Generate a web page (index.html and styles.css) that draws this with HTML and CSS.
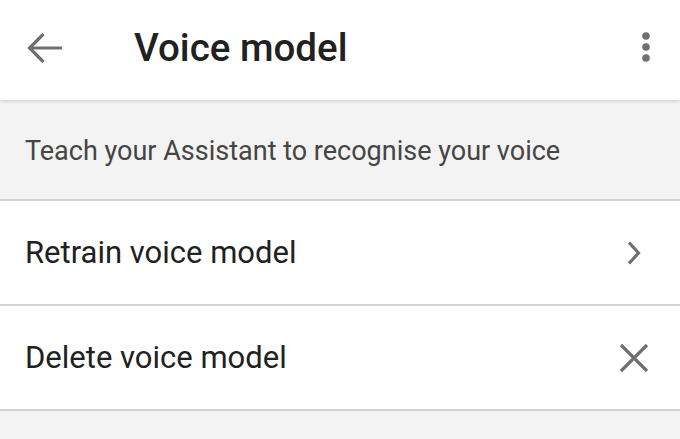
FILE: index.html
```html
<!DOCTYPE html>
<html>
<head>
<meta charset="utf-8">
<link rel="stylesheet" href="styles.css">
</head>
<body>
<header class="appbar">
  <svg class="back" width="40" height="40" viewBox="0 0 40 40"><path d="M38 20H8M19.5 6L5.5 20L19.5 34" fill="none" stroke="#707070" stroke-width="3.2"/></svg>
  <h1 class="title">Voice model</h1>
  <svg class="more" width="12" height="34" viewBox="0 0 12 34"><circle cx="6" cy="5" r="3.8" fill="#707070"/><circle cx="6" cy="16" r="3.8" fill="#707070"/><circle cx="6" cy="27" r="3.8" fill="#707070"/></svg>
</header>
<section class="intro">Teach your Assistant to recognise your voice</section>
<div class="row">
  <span class="label">Retrain voice model</span>
  <svg class="icon" width="30" height="30" viewBox="0 0 30 30"><path d="M10 4.5L19.5 15L10 25.5" fill="none" stroke="#707070" stroke-width="3.2"/></svg>
</div>
<div class="row">
  <span class="label">Delete voice model</span>
  <svg class="icon" width="30" height="30" viewBox="0 0 30 30"><path d="M2 2L28 28M28 2L2 28" fill="none" stroke="#707070" stroke-width="3.2"/></svg>
</div>
</body>
</html>
```
FILE: styles.css
```css
html, body {
  margin: 0;
  padding: 0;
  background: #f3f3f3;
  font-family: Roboto, "Liberation Sans", sans-serif;
}
.appbar {
  position: relative;
  z-index: 1;
  height: 100px;
  background: #fff;
  display: flex;
  align-items: center;
  padding: 0 28px 0 24px;
  box-shadow: 0 1px 4px rgba(0,0,0,0.16);
}
.back {
  margin-top: -4px;
}
.title {
  margin: -4px 0 0 70px;
  flex: 1;
  font-size: 38.5px;
  font-weight: 500;
  color: #212121;
  line-height: 1;
}
.more {
  margin-top: -5px;
}
.intro {
  height: 101px;
  box-sizing: border-box;
  display: flex;
  align-items: center;
  padding: 2px 25px 0;
  font-size: 27px;
  color: #454545;
  border-bottom: 2px solid #d2d2d2;
}
.row {
  height: 105px;
  box-sizing: border-box;
  background: #fff;
  display: flex;
  align-items: center;
  justify-content: space-between;
  padding: 0 31px 0 25px;
  border-bottom: 2px solid #d2d2d2;
}
.label {
  font-size: 31px;
  color: #212121;
}
```
